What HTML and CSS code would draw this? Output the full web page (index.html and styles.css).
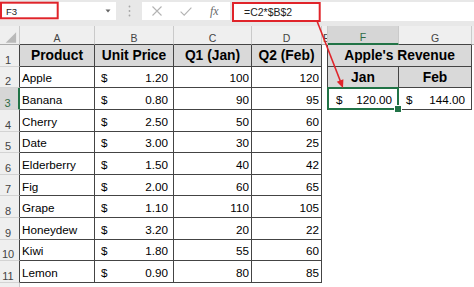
FILE: index.html
```html
<!DOCTYPE html>
<html>
<head>
<meta charset="utf-8">
<link rel="stylesheet" href="styles.css">
</head>
<body>
<div class="topbar">
  <div class="namebox"><span>F3</span>
    <svg width="6" height="4" viewBox="0 0 6 4"><path d="M0.5 0.5 L5.5 0.5 L3 3.5 Z" fill="#666"/></svg>
  </div>
  <div class="grip">
    <svg width="3" height="12" viewBox="0 0 3 12"><circle cx="1.5" cy="1.5" r="0.9" fill="#a6a6a6"/><circle cx="1.5" cy="6" r="0.9" fill="#a6a6a6"/><circle cx="1.5" cy="10.5" r="0.9" fill="#a6a6a6"/></svg>
  </div>
  <div class="fxbox">
    <svg class="ico" width="10" height="10" viewBox="0 0 10 10"><path d="M0.5 0.5 L9.5 9.5 M9.5 0.5 L0.5 9.5" stroke="#b3b3b3" stroke-width="1.1" fill="none"/></svg>
    <svg class="ico" width="12" height="9" viewBox="0 0 12 9"><path d="M0.6 4.6 L4.2 8.2 L11.4 0.6" stroke="#b3b3b3" stroke-width="1.1" fill="none"/></svg>
    <span class="fx">fx</span>
  </div>
  <div class="formula">=C2*$B$2</div>
</div>

<div class="sheet">
  <div class="corner"><svg width="20" height="19" viewBox="0 0 20 19"><path d="M17 6 L17 17 L6 17 Z" fill="#b9b9b9"/></svg></div>
  <div class="ch dk">A</div>
  <div class="ch dk">B</div>
  <div class="ch dk">C</div>
  <div class="ch dk">D</div>
  <div class="ch edgeh">E</div>
  <div class="ch sel">F</div>
  <div class="ch dk">G</div>
  <div class="ch lt"></div>

  <div class="rh">1</div>
  <div class="t hd">Product</div>
  <div class="t hd">Unit Price</div>
  <div class="t hd">Q1 (Jan)</div>
  <div class="t hd">Q2 (Feb)</div>
  <div class="e edge"></div>
  <div class="t hd span2">Apple's Revenue</div>
  <div class="e"></div>

  <div class="rh">2</div>
  <div class="t txt">Apple</div>
  <div class="t acc"><span>$</span><span>1.20</span></div>
  <div class="t num">100</div>
  <div class="t num">120</div>
  <div class="e edge"></div>
  <div class="t hd">Jan</div>
  <div class="t hd">Feb</div>
  <div class="e"></div>

  <div class="rh sel">3</div>
  <div class="t txt">Banana</div>
  <div class="t acc"><span>$</span><span>0.80</span></div>
  <div class="t num">90</div>
  <div class="t num">95</div>
  <div class="e edge"></div>
  <div class="t acc accf selcell"><span>$</span><span>120.00</span></div>
  <div class="t acc accg"><span>$</span><span>144.00</span></div>
  <div class="e"></div>

  <div class="rh">4</div>
  <div class="t txt">Cherry</div>
  <div class="t acc"><span>$</span><span>2.50</span></div>
  <div class="t num">50</div>
  <div class="t num">60</div>
  <div class="e"></div><div class="e"></div><div class="e"></div><div class="e"></div>

  <div class="rh">5</div>
  <div class="t txt">Date</div>
  <div class="t acc"><span>$</span><span>3.00</span></div>
  <div class="t num">30</div>
  <div class="t num">25</div>
  <div class="e"></div><div class="e"></div><div class="e"></div><div class="e"></div>

  <div class="rh">6</div>
  <div class="t txt">Elderberry</div>
  <div class="t acc"><span>$</span><span>1.50</span></div>
  <div class="t num">40</div>
  <div class="t num">42</div>
  <div class="e"></div><div class="e"></div><div class="e"></div><div class="e"></div>

  <div class="rh">7</div>
  <div class="t txt">Fig</div>
  <div class="t acc"><span>$</span><span>2.00</span></div>
  <div class="t num">60</div>
  <div class="t num">65</div>
  <div class="e"></div><div class="e"></div><div class="e"></div><div class="e"></div>

  <div class="rh">8</div>
  <div class="t txt">Grape</div>
  <div class="t acc"><span>$</span><span>1.10</span></div>
  <div class="t num">110</div>
  <div class="t num">105</div>
  <div class="e"></div><div class="e"></div><div class="e"></div><div class="e"></div>

  <div class="rh">9</div>
  <div class="t txt">Honeydew</div>
  <div class="t acc"><span>$</span><span>3.20</span></div>
  <div class="t num">20</div>
  <div class="t num">22</div>
  <div class="e"></div><div class="e"></div><div class="e"></div><div class="e"></div>

  <div class="rh">10</div>
  <div class="t txt">Kiwi</div>
  <div class="t acc"><span>$</span><span>1.80</span></div>
  <div class="t num">55</div>
  <div class="t num">60</div>
  <div class="e"></div><div class="e"></div><div class="e"></div><div class="e"></div>

  <div class="rh">11</div>
  <div class="t txt">Lemon</div>
  <div class="t acc"><span>$</span><span>0.90</span></div>
  <div class="t num">80</div>
  <div class="t num">85</div>
  <div class="e"></div><div class="e"></div><div class="e"></div><div class="e"></div>

  <div class="rh last"></div>
  <div class="e"></div><div class="e"></div><div class="e"></div><div class="e"></div>
  <div class="e"></div><div class="e"></div><div class="e"></div><div class="e"></div>
</div>

<svg class="overlay" width="474" height="287" viewBox="0 0 474 287">
  <rect x="1" y="2.7" width="56.7" height="15.6" fill="none" stroke="#e0242a" stroke-width="2"/>
  <rect x="233" y="3" width="86.7" height="18" fill="none" stroke="#e0242a" stroke-width="2"/>
  <line x1="317" y1="21" x2="340.3" y2="81" stroke="#e0242a" stroke-width="1.6"/>
  <polygon points="343,88 336.8,81.8 343.4,79.3" fill="#e0242a"/>
</svg>
</body>
</html>
```

FILE: styles.css
```css
* { box-sizing: border-box; }
html, body { margin: 0; padding: 0; }
body {
  width: 474px;
  height: 287px;
  overflow: hidden;
  background: #ffffff;
  font-family: "Liberation Sans", Arial, sans-serif;
  position: relative;
}

.topbar {
  height: 26px;
  background: #e8e8e8;
  display: flex;
  align-items: flex-start;
  padding-top: 2px;
}
.namebox {
  width: 116px;
  height: 18px;
  background: #ffffff;
  display: flex;
  align-items: center;
  justify-content: space-between;
  padding: 0 5px 0 6px;
  font-size: 9.6px;
  color: #222;
}
.grip {
  width: 26px;
  height: 18px;
  display: flex;
  align-items: center;
  justify-content: center;
}
.fxbox {
  width: 88px;
  height: 18px;
  background: #ffffff;
  display: flex;
  align-items: center;
  padding-left: 10px;
  gap: 18px;
}
.fx {
  font-family: "Liberation Serif", "Times New Roman", serif;
  font-style: italic;
  font-size: 12px;
  color: #6a6a6a;
  margin-left: 0;
}
.formula {
  flex: 1;
  height: 19px;
  margin-left: 2px;
  background: #ffffff;
  display: flex;
  align-items: center;
  padding-left: 12px;
  font-size: 10.5px;
  color: #222;
}

.sheet {
  display: grid;
  grid-template-columns: 20px 75px 79px 78px 70px 6px 71px 73px 2px;
  grid-template-rows: 19px repeat(11, 21.64px) 22px;
}
.sheet > div {
  display: flex;
  align-items: center;
  overflow: hidden;
  white-space: nowrap;
  font-size: 11.7px;
  color: #000;
}

.corner {
  background: #efefef;
  border-right: 1px solid #c9c9c9;
  border-bottom: 1px solid #ababab;
}
.sheet > .ch {
  background: #efefef;
  border-right: 1px solid #cacaca;
  border-bottom: 1px solid #ababab;
  font-size: 10.5px;
  line-height: 12px;
  color: #444;
  justify-content: center;
  align-items: flex-end;
}
.sheet > .ch.dk { border-bottom-color: #444; }
.sheet > .ch.edgeh { justify-content: flex-start; padding-left: 1px; }
.sheet > .ch.sel {
  background: #d6d6d6;
  color: #2f6b47;
  border-bottom: 2px solid #217346;
}
.sheet > .ch.lt { border-right: none; }

.sheet > .rh {
  background: #efefef;
  border-right: 1px solid #444;
  border-bottom: 1px solid #d3d3d3;
  font-size: 11px;
  line-height: 12px;
  color: #444;
  justify-content: center;
  align-items: flex-end;
  padding-right: 3px;
}
.sheet > .rh.sel {
  background: #d6d6d6;
  border-right: 2px solid #217346;
  color: #2f6b47;
}
.sheet > .rh.last { border-right-color: #c9c9c9; }

.sheet > .t {
  border-right: 1px solid #444;
  border-bottom: 1px solid #444;
  padding-top: 2px;
}
.sheet > .hd {
  background: #d9d9d9;
  font-weight: bold;
  font-size: 13.8px;
  justify-content: center;
  padding-top: 1px;
}
.span2 { grid-column: span 2; }
.sheet > .txt { padding-left: 2px; }
.sheet > .num { justify-content: flex-end; padding-right: 2px; }
.sheet > .acc { justify-content: space-between; padding-left: 6px; padding-right: 5px; }
.sheet > .accf { padding-left: 8px; padding-right: 6px; }
.sheet > .accg { padding-left: 7px; padding-right: 6px; }
.sheet > .edge { border-right: 1px solid #444; }

.sheet > .selcell { position: relative; overflow: visible; }
.selcell::before {
  content: "";
  position: absolute;
  left: -1px;
  top: -1px;
  right: -1px;
  bottom: -1px;
  border: 2px solid #217346;
}
.selcell::after {
  content: "";
  position: absolute;
  right: -4px;
  bottom: -4px;
  width: 6px;
  height: 6px;
  background: #217346;
  border: 1px solid #ffffff;
}

.overlay {
  position: absolute;
  left: 0;
  top: 0;
  pointer-events: none;
}
```
